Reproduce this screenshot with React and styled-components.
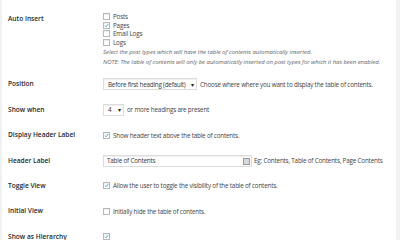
import React from "react";
import styled, { createGlobalStyle } from "styled-components";

const GlobalStyle = createGlobalStyle`
  html, body {
    margin: 0;
    padding: 0;
    background: #f1f1f1;
    font-family: "Open Sans", "Liberation Sans", sans-serif;
    color: #444;
  }
`;

const postTypes = [
  { name: "Posts", checked: false },
  { name: "Pages", checked: true },
  { name: "Email Logs", checked: false },
  { name: "Logs", checked: false },
];

const App = () => {
  return (
    <>
      <GlobalStyle />
      <Panel>
        <Row $top>
          <Label $top>Auto Insert</Label>
          <Field $column>
            <CheckList>
              {postTypes.map((type) => (
                <CheckItem key={type.name}>
                  <Checkbox checked={type.checked} />
                  {type.name}
                </CheckItem>
              ))}
            </CheckList>
            <Description>
              Select the post types which will have the table of contents automatically inserted.
            </Description>
            <Description>
              NOTE: The table of contents will only be automatically inserted on post types for which it has been enabled.
            </Description>
          </Field>
        </Row>

        <Row>
          <Label>Position</Label>
          <Field>
            <Select $width={94}>
              Before first heading (default)
              <Arrow>▾</Arrow>
            </Select>
            <Hint>Choose where where you want to display the table of contents.</Hint>
          </Field>
        </Row>

        <Row>
          <Label>Show when</Label>
          <Field>
            <Select $width={21}>
              4
              <Arrow>▾</Arrow>
            </Select>
            <Hint>or more headings are present</Hint>
          </Field>
        </Row>

        <Row>
          <Label>Display Header Label</Label>
          <Field>
            <CheckItem>
              <Checkbox checked />
              Show header text above the table of contents.
            </CheckItem>
          </Field>
        </Row>

        <Row>
          <Label>Header Label</Label>
          <Field>
            <TextInput>
              Table of Contents
              <InputIcon />
            </TextInput>
            <Hint>Eg: Contents, Table of Contents, Page Contents</Hint>
          </Field>
        </Row>

        <Row>
          <Label>Toggle View</Label>
          <Field>
            <CheckItem>
              <Checkbox checked />
              Allow the user to toggle the visibility of the table of contents.
            </CheckItem>
          </Field>
        </Row>

        <Row>
          <Label>Initial View</Label>
          <Field>
            <CheckItem>
              <Checkbox />
              Initially hide the table of contents.
            </CheckItem>
          </Field>
        </Row>

        <Row>
          <Label>Show as Hierarchy</Label>
          <Field>
            <CheckItem>
              <Checkbox checked />
            </CheckItem>
          </Field>
        </Row>
      </Panel>
    </>
  );
};

const Checkbox = ({ checked }) => (
  <Box>
    {checked && (
      <svg width="7" height="7" viewBox="0 0 16 16">
        <path d="M3 8.5 L6.5 12 L13.5 3.5" fill="none" stroke="#1e8cbe" strokeWidth="2.6" />
      </svg>
    )}
  </Box>
);

export default App;

const Panel = styled.div`
  margin: 0 4px 0 2px;
  height: 240px;
  background: #fff;
  padding: 12.5px 0 0 6px;
  box-sizing: border-box;
  overflow: hidden;
`;

const Row = styled.div`
  display: flex;
  align-items: ${(p) => (p.$top ? "flex-start" : "center")};
  padding: ${(p) => (p.$top ? "0 0 5.2px" : "6.7px 0")};
`;

const Label = styled.div`
  width: 95px;
  flex-shrink: 0;
  font-size: 6.6px;
  font-weight: 600;
  color: #23282d;
  line-height: 12px;
  padding-top: ${(p) => (p.$top ? "0.5px" : "0")};
`;

const Field = styled.div`
  display: flex;
  flex-direction: ${(p) => (p.$column ? "column" : "row")};
  align-items: ${(p) => (p.$column ? "flex-start" : "center")};
  min-height: 12px;
  font-size: 6.3px;
  letter-spacing: -0.19px;
  color: #444;
`;

const CheckList = styled.div`
  display: flex;
  flex-direction: column;
`;

const CheckItem = styled.div`
  display: flex;
  align-items: center;
  height: 8.5px;
  font-size: 6.3px;
  letter-spacing: -0.19px;
  color: #444;
`;

const Box = styled.span`
  width: 7px;
  height: 7px;
  box-sizing: border-box;
  border: 1px solid #b4b9be;
  background: #fff;
  box-shadow: inset 0 1px 1px rgba(0, 0, 0, 0.07);
  margin-right: 3px;
  display: flex;
  align-items: center;
  justify-content: center;
  flex-shrink: 0;
`;

const Description = styled.div`
  font-style: italic;
  font-size: 6px;
  letter-spacing: -0.05px;
  color: #666;
  line-height: 9px;
  margin-top: 1px;
  white-space: nowrap;
`;

const Select = styled.div`
  position: relative;
  width: ${(p) => p.$width}px;
  height: 12px;
  box-sizing: border-box;
  border: 1px solid #ddd;
  box-shadow: inset 0 1px 1px rgba(0, 0, 0, 0.07);
  background: #fff;
  padding: 0 0 0 4px;
  display: flex;
  align-items: center;
  font-size: 6.3px;
  letter-spacing: -0.22px;
  color: #32373c;
  white-space: nowrap;
  margin-right: 3px;
`;

const Arrow = styled.span`
  position: absolute;
  right: 2px;
  top: 1.5px;
  font-size: 6px;
  color: #222;
`;

const TextInput = styled.div`
  position: relative;
  width: 149px;
  height: 12px;
  box-sizing: border-box;
  border: 1px solid #ddd;
  box-shadow: inset 0 1px 1px rgba(0, 0, 0, 0.07);
  background: #fff;
  padding-left: 3px;
  display: flex;
  align-items: center;
  color: #32373c;
  margin-right: 2px;
`;

const InputIcon = styled.span`
  position: absolute;
  right: 1.5px;
  top: 2.5px;
  width: 5px;
  height: 5px;
  border: 1px solid #9a9a9a;
  background: #d9d9d9;
`;

const Hint = styled.span`
  color: #444;
  white-space: nowrap;
`;
